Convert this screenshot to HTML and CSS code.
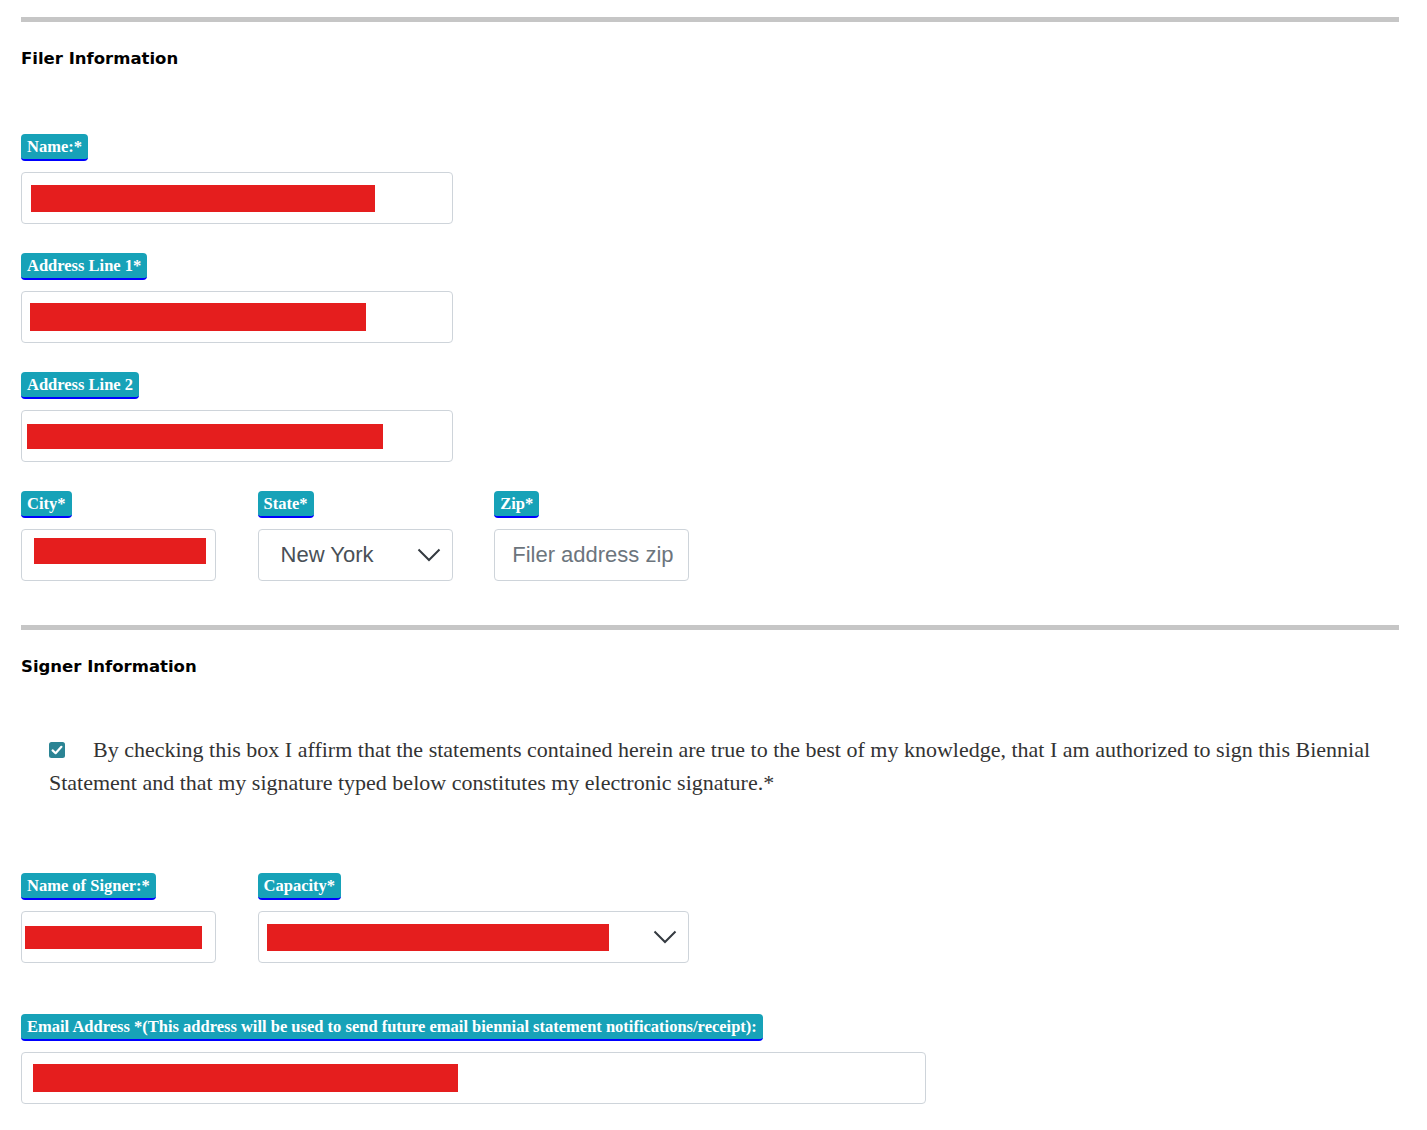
FILE: index.html
```html
<!DOCTYPE html>
<html lang="en">
<head>
<meta charset="utf-8">
<title>Biennial Statement</title>
<link rel="stylesheet" href="styles.css">
</head>
<body>
<div class="page">
  <section class="section">
    <hr class="rule">
    <h2 class="section-title">Filer Information</h2>
    <div class="form-grid filer-grid">
      <div class="field span-2">
        <label class="badge">Name:*</label>
        <div class="control"><span class="redact" style="margin-left:9px;width:344px;height:27px"></span></div>
      </div>
      <div class="field span-2 row-start">
        <label class="badge">Address Line 1*</label>
        <div class="control"><span class="redact" style="margin-left:8px;width:336px;height:28px"></span></div>
      </div>
      <div class="field span-2 row-start">
        <label class="badge">Address Line 2</label>
        <div class="control"><span class="redact" style="margin-left:5px;width:356px;height:25px"></span></div>
      </div>
      <div class="field row-start">
        <label class="badge">City*</label>
        <div class="control"><span class="redact" style="margin-left:12px;margin-bottom:8px;width:172px;height:26px"></span></div>
      </div>
      <div class="field">
        <label class="badge">State*</label>
        <div class="control select"><span class="value">New York</span><svg class="chev" viewBox="0 0 24 14" width="24" height="14"><path d="M1.5 1.5 L12 12 L22.5 1.5" fill="none" stroke="#343a40" stroke-width="2"/></svg></div>
      </div>
      <div class="field">
        <label class="badge">Zip*</label>
        <div class="control"><span class="placeholder">Filer address zip</span></div>
      </div>
    </div>
  </section>

  <section class="section signer">
    <hr class="rule">
    <h2 class="section-title">Signer Information</h2>
    <p class="affirm"><span class="check"><svg viewBox="0 0 16 16" width="16" height="16"><rect x="0" y="0" width="16" height="16" rx="2.5" fill="#2b8494"/><path d="M3.6 8.4 L6.6 11.2 L12.4 4.8" fill="none" stroke="#fff" stroke-width="2.2" stroke-linecap="round" stroke-linejoin="round"/></svg></span>By checking this box I affirm that the statements contained herein are true to the best of my knowledge, that I am authorized to sign this Biennial Statement and that my signature typed below constitutes my electronic signature.*</p>
    <div class="form-grid signer-grid">
      <div class="field">
        <label class="badge">Name of Signer:*</label>
        <div class="control"><span class="redact" style="margin-left:3px;width:177px;height:23px"></span></div>
      </div>
      <div class="field span-2">
        <label class="badge">Capacity*</label>
        <div class="control select"><span class="redact" style="margin-left:8px;width:342px;height:27px"></span><svg class="chev" viewBox="0 0 24 14" width="24" height="14"><path d="M1.5 1.5 L12 12 L22.5 1.5" fill="none" stroke="#343a40" stroke-width="2"/></svg></div>
      </div>
      <div class="field span-4 row-start email">
        <label class="badge">Email Address *(This address will be used to send future email biennial statement notifications/receipt):</label>
        <div class="control"><span class="redact" style="margin-left:11px;width:425px;height:28px"></span></div>
      </div>
    </div>
  </section>
</div>
</body>
</html>
```

FILE: styles.css
```css
html, body {
  margin: 0;
  padding: 0;
  background: #ffffff;
}

.page {
  width: 1378px;
  padding: 17px 0 20px 21px;
}

.rule {
  margin: 0;
  border: 0;
  height: 5px;
  background: #c6c6c6;
}

.section-title {
  margin: 0;
  padding-top: 26px;
  font-family: "DejaVu Sans", Verdana, sans-serif;
  font-weight: bold;
  font-size: 16.5px;
  line-height: 22px;
  color: #000;
}

.form-grid {
  display: grid;
  grid-template-columns: repeat(6, 1fr);
  column-gap: 41.6px;
  row-gap: 29px;
}

.filer-grid {
  margin-top: 64px;
}

.field {
  display: flex;
  flex-direction: column;
  align-items: flex-start;
  gap: 11px;
}

.span-2 { grid-column: span 2; }
.span-4 { grid-column: span 4; }
.row-start { grid-column-start: 1; }
.field.span-2.row-start { grid-column: 1 / span 2; }
.field.span-4.row-start { grid-column: 1 / span 4; }

.badge {
  display: inline-block;
  background: #17a2b8;
  color: #fff;
  font-family: "Liberation Serif", "Times New Roman", serif;
  font-weight: bold;
  font-size: 16.5px;
  line-height: 19px;
  padding: 3px 6px 3px 6px;
  border-bottom: 2px solid #0000ff;
  border-radius: 4px;
  white-space: nowrap;
}

.control {
  box-sizing: border-box;
  width: 100%;
  height: 52px;
  border: 1px solid #ced4da;
  border-radius: 4px;
  background: #fff;
  display: flex;
  align-items: center;
  position: relative;
}

.redact {
  display: block;
  background: #e51e1e;
}

.select .chev {
  position: absolute;
  right: 11px;
  top: 18px;
}

.value {
  margin-left: 22px;
  font-family: "Liberation Sans", Arial, sans-serif;
  font-size: 22px;
  color: #495057;
}

.placeholder {
  margin-left: 17px;
  font-family: "Liberation Sans", Arial, sans-serif;
  font-size: 22px;
  color: #6c757d;
}

.signer {
  margin-top: 44px;
}

.affirm {
  margin: 55px 28px 0 28px;
  font-family: "Liberation Serif", "Times New Roman", serif;
  font-size: 22px;
  line-height: 33px;
  color: #333;
}

.check {
  display: inline-block;
  width: 16px;
  height: 16px;
  margin-right: 28px;
  vertical-align: -1px;
}

.check svg {
  display: block;
}

.signer-grid {
  margin-top: 74px;
  row-gap: 51px;
}
```
